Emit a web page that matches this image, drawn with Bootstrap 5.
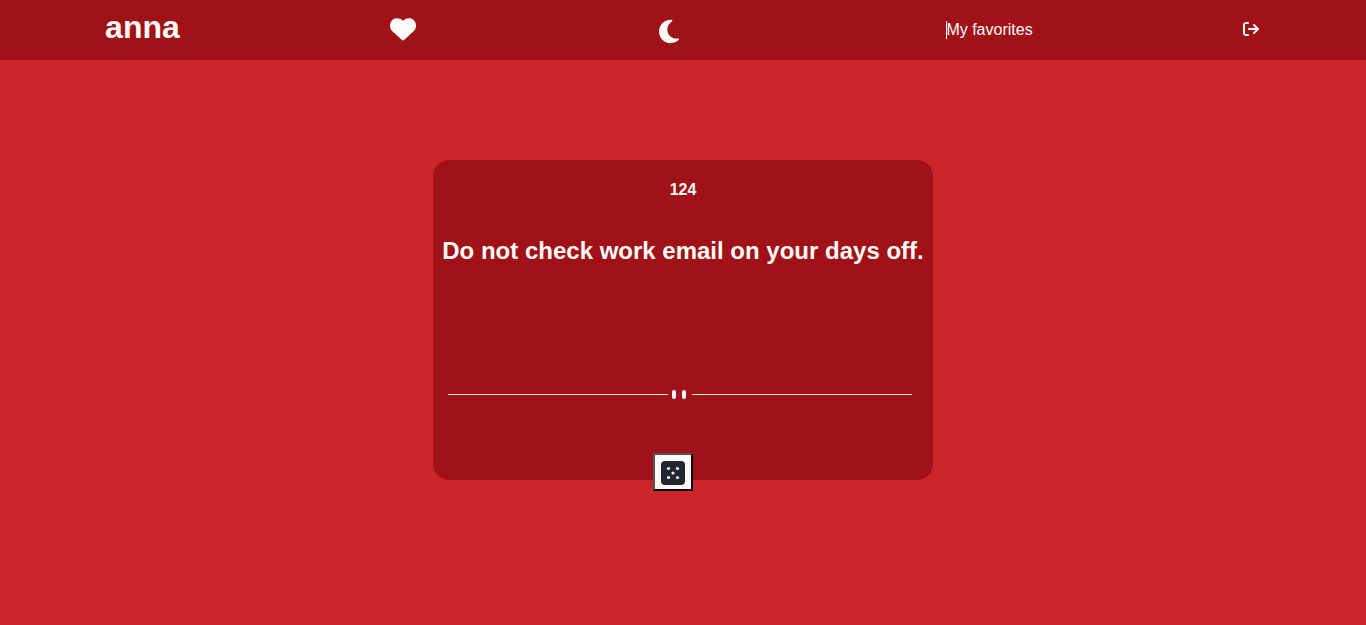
<!DOCTYPE html>
<html lang="en">
<head>
<meta charset="utf-8">
<meta name="viewport" content="width=device-width, initial-scale=1">
<title>Advice</title>
<link href="https://cdn.jsdelivr.net/npm/bootstrap@5.3.0/dist/css/bootstrap.min.css" rel="stylesheet">
<style>
  body { background: #cc262d; color: #fcfbf7; font-family: "Liberation Sans", Arial, sans-serif; }
  svg { display: block; fill: currentColor; }
  button { color: inherit; }
  .topbar, .advice { background: #a01217; }
  .topbar { height: 60px; }
  .brand { font-size: 32px; line-height: 36px; margin-bottom: 6px; }
  .icon-button { padding: 0 0 2px; background: transparent; border: 0; }
  .theme { width: 110px; padding: 5px 0 0 33px; }
  .logout { padding-right: 2px; }
  .favorites { line-height: 18px; box-shadow: inset 1px 0 #fcfbf7; }
  .advice { max-width: 500px; height: 320px; margin-top: 100px; border-radius: 16px; }
  .advice-id { font-size: 16px; line-height: 18px; margin: 21px 0 38px; }
  .advice-text { font-size: 24px; line-height: 28px; height: 149px; margin: 0; }
  .divider { padding: 0 21px 0 15px; }
  .dice { width: 40px; height: 38px; margin: 51px 20px 0 0; padding: 1px 0 0; background: #fcfbf7; color: #202733; border: 2px outset #000; }
</style>
</head>
<body class="min-vh-100">
<header>
  <nav class="topbar d-flex align-items-center justify-content-around">
    <h1 class="brand fw-bold">anna</h1>
    <button class="icon-button" type="button" aria-label="Add to favorites">
      <svg width="26" height="26" viewBox="0 0 512 512"><path d="M47.6 300.4L228.3 469.1c7.5 7 17.4 10.9 27.7 10.9s20.2-3.9 27.7-10.9L464.4 300.4c30.4-28.3 47.6-68 47.6-109.5v-5.8c0-69.9-50.5-129.5-119.4-141C347 36.5 300.6 51.4 268 84L256 96 244 84c-32.6-32.6-79-47.5-124.6-39.9C50.5 55.6 0 115.2 0 185.1v5.8c0 41.5 17.2 81.2 47.6 109.5z"/></svg>
    </button>
    <div class="theme d-flex">
      <button class="icon-button" type="button" aria-label="Dark mode">
        <svg width="20" height="27" viewBox="0 0 384 512"><path d="M223.5 32C100 32 0 132.3 0 256S100 480 223.5 480c60.6 0 115.5-24.2 155.8-63.4c5-4.9 6.3-12.5 3.1-18.7s-10.1-9.7-17-8.5c-9.8 1.7-19.8 2.6-30.1 2.6c-96.9 0-175.5-78.8-175.5-176c0-65.8 36-123.1 89.3-153.3c6.1-3.5 9.2-10.5 7.7-17.3s-7.3-11.9-14.3-12.5c-6.3-.5-12.6-.8-19-.8z"/></svg>
      </button>
    </div>
    <a class="favorites text-reset text-decoration-none" href="#favorites">My favorites</a>
    <button class="icon-button logout" type="button" aria-label="Log out">
      <svg width="16" height="16" viewBox="0 0 512 512"><path d="M502.6 278.6c12.5-12.5 12.5-32.8 0-45.3l-128-128c-12.5-12.5-32.8-12.5-45.3 0s-12.5 32.8 0 45.3L402.7 224 192 224c-17.7 0-32 14.3-32 32s14.3 32 32 32l210.7 0-73.4 73.4c-12.5 12.5-12.5 32.8 0 45.3s32.8 12.5 45.3 0l128-128zM160 96c17.7 0 32-14.3 32-32s-14.3-32-32-32L96 32C43 32 0 75 0 128L0 384c0 53 43 96 96 96l64 0c17.7 0 32-14.3 32-32s-14.3-32-32-32l-64 0c-17.7 0-32-14.3-32-32l0-256c0-17.7 14.3-32 32-32l64 0z"/></svg>
    </button>
  </nav>
</header>
<main>
  <section class="advice mx-auto d-flex flex-column align-items-center text-center">
    <h2 class="advice-id fw-bold">124</h2>
    <p class="advice-text flex-shrink-0 fw-bold">Do not check work email on your days off.</p>
    <div class="divider flex-shrink-0 w-100">
      <svg width="100%" viewBox="0 0 464 16" aria-hidden="true">
        <path fill="#e4f1cf" d="M0 8h220v1H0zM244 8h220v1H244z"/>
        <g fill="#eef4fb"><rect x="224" y="4" width="4" height="9" rx="2"/><rect x="234" y="4" width="4" height="9" rx="2"/></g>
      </svg>
    </div>
    <button class="dice d-flex flex-shrink-0 align-items-center justify-content-center" type="button" aria-label="New advice">
      <svg width="24" height="24" viewBox="0 0 24 24"><rect width="24" height="24" rx="4"/><g fill="#fcfbf7"><circle cx="7.5" cy="7.5" r="1.6"/><circle cx="16.5" cy="7.5" r="1.6"/><circle cx="12" cy="12" r="1.6"/><circle cx="7.5" cy="16.5" r="1.6"/><circle cx="16.5" cy="16.5" r="1.6"/></g></svg>
    </button>
  </section>
</main>
<script src="https://cdn.jsdelivr.net/npm/bootstrap@5.3.0/dist/js/bootstrap.bundle.min.js"></script>
</body>
</html>
